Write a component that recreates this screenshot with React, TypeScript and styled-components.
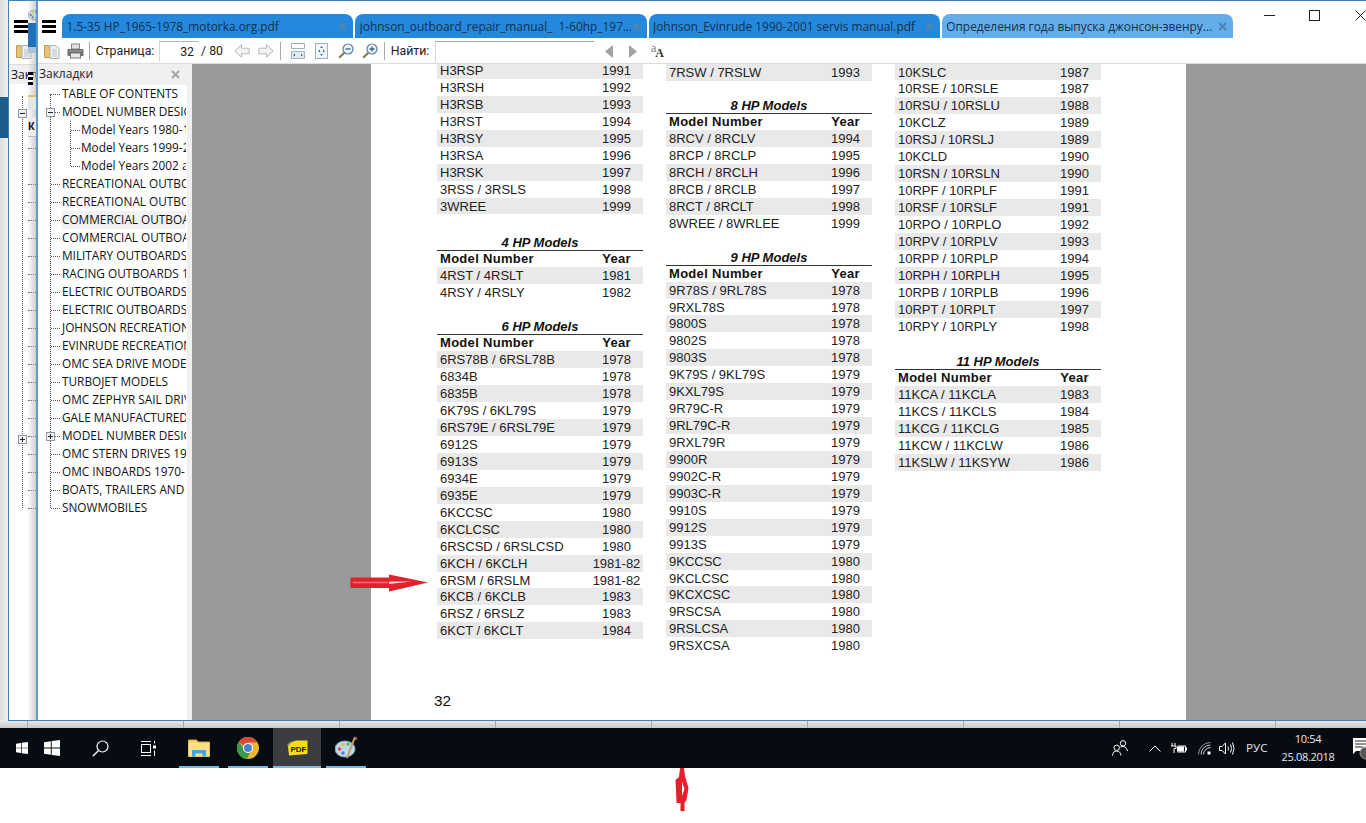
import React from 'react';
import styled, { createGlobalStyle } from 'styled-components';

const GlobalStyle = createGlobalStyle`
  html, body {
    margin: 0;
    padding: 0;
    background: #fff;
    overflow: hidden;
  }
  * {
    box-sizing: border-box;
  }
`;

const uiFont = `"Open Sans", "Noto Sans", sans-serif`;
const toolFont = `Roboto, "Open Sans", sans-serif`;
const docFont = `"Liberation Sans", Arial, sans-serif`;

const Screen = styled.div`
  width: 1366px;
  height: 823px;
  overflow: hidden;
  display: flex;
  flex-direction: column;
  background: #fff;
`;

const Desktop = styled.div`
  position: relative;
  height: 728px;
  flex: none;
  overflow: hidden;
  background: linear-gradient(90deg, #dcdcdc 0, #f1f1f1 8px);
`;

const OtherAppBand = styled.div`
  position: absolute;
  left: 0;
  top: 97px;
  width: 8px;
  height: 41px;
  background: #1a5c8c;
`;

const WindowEdgeStrip = styled.div`
  position: absolute;
  left: 0;
  right: 0;
  bottom: 0;
  height: 8px;
  background:
    repeating-linear-gradient(90deg, transparent 0, transparent 27px, #a9a9a9 27px, #a9a9a9 28px, transparent 28px, transparent 156px),
    linear-gradient(180deg, #ececec, #c8c8c8);
`;

/* the window sitting behind the active one, only its left edge shows */
const BackWindow = styled.div`
  position: absolute;
  left: 8px;
  top: 0;
  width: 28px;
  height: 721px;
  background: #fff;
  border-left: 1px solid #3f82b8;
  border-top: 1px solid #3f82b8;
  border-bottom: 1px solid #3f82b8;
  overflow: hidden;
`;

const BackShade = styled.div`
  position: absolute;
  left: 19px;
  top: 0;
  bottom: 0;
  width: 8px;
  background: linear-gradient(90deg, rgba(225, 225, 225, 0.15), rgba(170, 170, 170, 0.55));
`;

const BackHeader = styled.div`
  position: absolute;
  left: 0;
  right: 0;
  top: 63px;
  height: 20px;
  background: #f0f0f0;
  border-top: 1px solid #ddd;
  font: 12px/19px ${uiFont};
  color: #111;
  padding-left: 2px;
  white-space: nowrap;
  overflow: hidden;
`;

const BackBurger = styled.div`
  position: absolute;
  left: 5px;
  top: 19px;
`;

const BackFolder = styled.div`
  position: absolute;
  left: 7px;
  top: 42px;
`;

const BackPaint = styled.div`
  position: absolute;
  left: 19px;
  top: 6px;
`;

const BackTabBlue = styled.div`
  position: absolute;
  left: 19px;
  top: 22px;
  width: 8px;
  height: 30px;
  background: #1f70ba;
  border-bottom: 6px solid #a9c0d8;
`;

const BackMiniBurger = styled.div`
  position: absolute;
  left: 19px;
  top: 71px;
  width: 5px;
  height: 13px;
  background: repeating-linear-gradient(180deg, #000 0, #000 3px, #fff 3px, #fff 5px);
`;

const BackDoc = styled.div`
  position: absolute;
  left: 19px;
  top: 94px;
  width: 8px;
  height: 15px;
  background: #e4e7ea;
  border-top: 2px solid #d6c27a;
`;

const BackColumnHead = styled.div`
  position: absolute;
  left: 19px;
  top: 116px;
  width: 8px;
  height: 20px;
  background: #ececec;
  border-bottom: 1px solid #bbb;
  font: bold 11px/18px ${docFont};
  color: #111;
  overflow: hidden;
`;

const BackTree = styled.div`
  position: absolute;
  left: 13px;
  top: 95px;
  height: 412px;
  width: 14px;
  border-left: 1px dotted #555;
`;

const BackTreeTick = styled.div<{ $top: number }>`
  position: absolute;
  left: 19px;
  width: 8px;
  top: ${(p) => p.$top}px;
  border-top: 1px dotted #555;
`;

const BackToggle = styled.div<{ $top: number }>`
  position: absolute;
  left: 9px;
  top: ${(p) => p.$top}px;
`;

const AppWindow = styled.div`
  position: absolute;
  left: 36px;
  top: 0;
  right: 0;
  height: 721px;
  display: flex;
  flex-direction: column;
  background: #fff;
  border-top: 1px solid #3f82b8;
  border-left: 2px solid #5f9acb;
  border-bottom: 1px solid #3f82b8;
  overflow: hidden;
`;

const TitleBar = styled.div`
  height: 37px;
  flex: none;
  display: flex;
  align-items: flex-end;
  padding-left: 4px;
`;

const Burger = styled.div`
  width: 14px;
  height: 13px;
  margin-bottom: 5px;
  margin-right: 6px;
  flex: none;
  background: repeating-linear-gradient(180deg, #000 0, #000 3px, #fff 3px, #fff 5px);
`;

const TabStrip = styled.div`
  display: flex;
  gap: 2px;
`;

const Tab = styled.div<{ $dim?: boolean }>`
  width: 291.25px;
  height: 24px;
  display: flex;
  align-items: center;
  padding: 0 5px 0 4.5px;
  border-radius: 8px 8px 0 0;
  background: ${(p) => (p.$dim ? '#63aeea' : '#2488dc')};
  color: #12314d;
  font: 11.9px/24px ${uiFont};
  white-space: pre;
`;

const TabTitle = styled.span`
  flex: 1;
  overflow: hidden;
`;

const WindowControls = styled.div`
  margin-left: auto;
  margin-right: -17px;
  align-self: flex-start;
  display: flex;
`;

const WindowButton = styled.div`
  width: 45.5px;
  height: 28px;
  display: flex;
  align-items: center;
  justify-content: center;
`;

const Toolbar = styled.div`
  height: 26px;
  flex: none;
  display: flex;
  align-items: center;
  border-bottom: 1px solid #dcdcdc;
  padding-top: 1px;
  font: 12.3px/18px ${toolFont};
  color: #222;
  white-space: nowrap;
`;

const Tool = styled.div<{ $ml: number; $w?: number }>`
  margin-left: ${(p) => p.$ml}px;
  width: ${(p) => (p.$w ? `${p.$w}px` : 'auto')};
  flex: none;
  display: flex;
  align-items: center;
  justify-content: center;
`;

const ToolSep = styled.div<{ $ml: number }>`
  margin-left: ${(p) => p.$ml}px;
  width: 1px;
  height: 18px;
  background: #a8a8a8;
  flex: none;
`;

const PageInput = styled.div`
  margin-left: 6px;
  width: 39px;
  height: 21px;
  flex: none;
  border-top: 1px solid #b5b5b5;
  border-left: 1px solid #d5d5d5;
  text-align: right;
  padding-right: 4px;
  line-height: 20px;
`;

const SearchInput = styled.div`
  margin-left: 7px;
  width: 159px;
  height: 21px;
  flex: none;
  border-top: 1px solid #a8a8a8;
  border-left: 1px solid #d5d5d5;
`;

const CaseToggle = styled.div`
  margin-left: 14px;
  width: 15px;
  height: 14px;
  flex: none;
  display: flex;
  color: #333;
  font-family: "Liberation Serif", serif;
  line-height: 12px;
`;

const CaseSmall = styled.span`
  font-size: 12px;
  color: #777;
  margin-top: -2px;
`;

const CaseBig = styled.span`
  font-size: 12px;
  font-weight: bold;
  margin-left: -1px;
  margin-top: 3px;
`;

const MainArea = styled.div`
  flex: 1;
  min-height: 0;
  display: flex;
`;

const Sidebar = styled.div`
  width: 149px;
  flex: none;
  display: flex;
  flex-direction: column;
  overflow: hidden;
  background: #fff;
`;

const SidebarHead = styled.div`
  height: 21px;
  flex: none;
  display: flex;
  align-items: center;
  justify-content: space-between;
  padding: 0 6px 1px 1px;
  background: #f0f0f0;
  font: 12px/20px ${uiFont};
  color: #222;
`;

const Splitter = styled.div`
  width: 5px;
  flex: none;
  background: #f0f0f0;
`;

const Tree = styled.div`
  position: relative;
  margin-right: 1px;
  &::before {
    content: '';
    position: absolute;
    left: 12px;
    top: 9px;
    bottom: 9px;
    border-left: 1px dotted #555;
  }
`;

const TreeBranch = styled.div`
  position: relative;
  &::before {
    content: '';
    position: absolute;
    left: 32px;
    top: 0;
    bottom: 9px;
    border-left: 1px dotted #555;
  }
`;

const TreeRow = styled.div<{ $level?: number; $active?: boolean }>`
  position: relative;
  height: 18px;
  padding-left: ${(p) => (p.$level === 2 ? 43 : 24)}px;
  font: 11.8px/16px ${uiFont};
  color: #111;
  white-space: nowrap;
  overflow: hidden;
  background: ${(p) => (p.$active ? '#f2f2f2' : 'transparent')};
  background-clip: content-box;
  &::before {
    content: '';
    position: absolute;
    top: 9px;
    left: ${(p) => (p.$level === 2 ? 33 : 13)}px;
    width: 9px;
    border-top: 1px dotted #555;
  }
`;

const ToggleBox = styled.div`
  position: absolute;
  left: 8px;
  top: 5px;
  z-index: 1;
`;

const Viewer = styled.div`
  flex: 1;
  min-width: 0;
  display: flex;
  justify-content: center;
  padding-right: 1px;
  background: #9a9a9a;
  overflow: hidden;
`;

const Page = styled.div`
  position: relative;
  width: 815px;
  height: 656px;
  flex: none;
  background: #fff;
  padding-left: 66px;
  display: flex;
  flex-direction: column;
  font: 13px/17px ${docFont};
  color: #222;
`;

const Columns = styled.div`
  display: flex;
  gap: 23px;
`;

const Column = styled.div<{ $offset: number }>`
  width: 206px;
  flex: none;
  margin-top: ${(p) => p.$offset}px;
`;

const Section = styled.div<{ $gap: number }>`
  margin-top: ${(p) => p.$gap}px;
`;

const SectionTitle = styled.div`
  height: 16px;
  line-height: 16px;
  text-align: center;
  font-weight: bold;
  font-style: italic;
  color: #111;
  border-bottom: 1.5px solid #333;
`;

const RowBase = styled.div`
  height: 16.95px;
  line-height: 17px;
  display: grid;
  grid-template-columns: 150px 56px;
  padding-left: 3px;
  white-space: nowrap;
`;

const HeadRow = styled(RowBase)`
  height: 16px;
  line-height: 16px;
  font-weight: bold;
  letter-spacing: 0.3px;
  color: #111;
`;

const RowList = styled.div`
  & > :nth-child(odd) {
    background: #e9e9e9;
  }
`;

const YearCell = styled.span`
  text-align: center;
  margin-left: -3px;
`;

const PageNumber = styled.div`
  position: absolute;
  left: 63px;
  top: 628px;
  font-size: 15.3px;
  line-height: 18px;
  color: #111;
`;

const ArrowMark = styled.svg`
  position: absolute;
  left: -21px;
  top: 510px;
`;

const Taskbar = styled.div`
  height: 40px;
  flex: none;
  display: flex;
  align-items: stretch;
  background: #070b12;
  color: #e8e8e8;
`;

const TaskSlot = styled.div<{ $ml: number; $w: number }>`
  margin-left: ${(p) => p.$ml}px;
  width: ${(p) => p.$w}px;
  flex: none;
  display: flex;
  align-items: center;
  justify-content: center;
`;

const AppSlot = styled(TaskSlot)<{ $current?: boolean }>`
  border-bottom: 2px solid #76b9ed;
  padding-top: 1px;
  background: ${(p) => (p.$current ? '#3a3c40' : 'transparent')};
`;

const Tray = styled.div`
  margin-left: auto;
  display: flex;
  align-items: stretch;
`;

const LangLabel = styled.div`
  margin-left: 11px;
  width: 22px;
  flex: none;
  display: flex;
  align-items: center;
  font: 11.6px/40px ${uiFont};
  white-space: nowrap;
`;

const Clock = styled.div`
  margin-left: 13px;
  width: 54px;
  flex: none;
  display: flex;
  flex-direction: column;
  align-items: center;
  justify-content: center;
  font: 11px/18px ${uiFont};
  letter-spacing: -0.3px;
  white-space: nowrap;
`;

const BottomArea = styled.div`
  flex: 1;
  padding-left: 675px;
  background: #fff;
`;

const LineIcon = styled.svg`
  display: block;
  flex: none;
`;

type Entry = [string, string];

const toRows = (text: string): Entry[] =>
  text.split('|').map((item) => item.split('=') as Entry);

const HP4 = toRows('4RST / 4RSLT=1981|4RSY / 4RSLY=1982');
const HP3 = toRows(
  'H3RSP=1991|H3RSH=1992|H3RSB=1993|H3RST=1994|H3RSY=1995|H3RSA=1996|H3RSK=1997|3RSS / 3RSLS=1998|3WREE=1999'
);
const HP6 = toRows(
  '6RS78B / 6RSL78B=1978|6834B=1978|6835B=1978|6K79S / 6KL79S=1979|6RS79E / 6RSL79E=1979|6912S=1979|6913S=1979|6934E=1979|6935E=1979|6KCCSC=1980|6KCLCSC=1980|6RSCSD / 6RSLCSD=1980|6KCH / 6KCLH=1981-82|6RSM / 6RSLM=1981-82|6KCB / 6KCLB=1983|6RSZ / 6RSLZ=1983|6KCT / 6KCLT=1984'
);
const HP7 = toRows('7RSW / 7RSLW=1993');
const HP8 = toRows(
  '8RCV / 8RCLV=1994|8RCP / 8RCLP=1995|8RCH / 8RCLH=1996|8RCB / 8RCLB=1997|8RCT / 8RCLT=1998|8WREE / 8WRLEE=1999'
);
const HP9 = toRows(
  '9R78S / 9RL78S=1978|9RXL78S=1978|9800S=1978|9802S=1978|9803S=1978|9K79S / 9KL79S=1979|9KXL79S=1979|9R79C-R=1979|9RL79C-R=1979|9RXL79R=1979|9900R=1979|9902C-R=1979|9903C-R=1979|9910S=1979|9912S=1979|9913S=1979|9KCCSC=1980|9KCLCSC=1980|9KCXCSC=1980|9RSCSA=1980|9RSLCSA=1980|9RSXCSA=1980'
);
const HP10 = toRows(
  '10KSLC=1987|10RSE / 10RSLE=1987|10RSU / 10RSLU=1988|10KCLZ=1989|10RSJ / 10RSLJ=1989|10KCLD=1990|10RSN / 10RSLN=1990|10RPF / 10RPLF=1991|10RSF / 10RSLF=1991|10RPO / 10RPLO=1992|10RPV / 10RPLV=1993|10RPP / 10RPLP=1994|10RPH / 10RPLH=1995|10RPB / 10RPLB=1996|10RPT / 10RPLT=1997|10RPY / 10RPLY=1998'
);
const HP11 = toRows(
  '11KCA / 11KCLA=1983|11KCS / 11KCLS=1984|11KCG / 11KCLG=1985|11KCW / 11KCLW=1986|11KSLW / 11KSYW=1986'
);

const tabs = [
  '1.5-35 HP_1965-1978_motorka.org.pdf',
  'johnson_outboard_repair_manual_  1-60hp_197...',
  'Johnson_Evinrude 1990-2001 servis manual.pdf',
  'Определения года выпуска джонсон-эвенру...',
];

const treeTop = ['TABLE OF CONTENTS'];
const treeMiddle = [
  'RECREATIONAL OUTBOARDS',
  'RECREATIONAL OUTBOARDS',
  'COMMERCIAL OUTBOARDS',
  'COMMERCIAL OUTBOARDS',
  'MILITARY OUTBOARDS',
  'RACING OUTBOARDS 1',
  'ELECTRIC OUTBOARDS',
  'ELECTRIC OUTBOARDS',
  'JOHNSON RECREATIONAL',
  'EVINRUDE RECREATIONAL',
  'OMC SEA DRIVE MODELS',
  'TURBOJET MODELS',
  'OMC ZEPHYR SAIL DRIVE',
  'GALE MANUFACTURED',
];
const treeBottom = [
  'OMC STERN DRIVES 1960',
  'OMC INBOARDS 1970-1',
  'BOATS, TRAILERS AND',
  'SNOWMOBILES',
];

const backTicks = [147, 183, 201, 219, 237, 255, 273, 291, 309, 327, 345, 363, 381, 399, 417, 435, 453, 471, 489, 507];

const CloseIcon = ({ color = '#4f86b5' }: { color?: string }) => (
  <LineIcon width="11" height="11" viewBox="0 0 11 11">
    <path d="M2 2l7 7M9 2l-7 7" stroke={color} strokeWidth="2.2" />
  </LineIcon>
);

const Toggle = ({ open }: { open: boolean }) => (
  <LineIcon width="9" height="9" viewBox="0 0 9 9">
    <rect x="0.5" y="0.5" width="8" height="8" fill="#f4f4f4" stroke="#8c97a3" />
    <path d={open ? 'M2 4.5h5' : 'M2 4.5h5M4.5 2v5'} stroke="#223" />
  </LineIcon>
);

const FolderIcon = () => (
  <LineIcon width="16" height="16" viewBox="0 0 16 16">
    <path d="M0.500 2.500h4l1 1.500h2v10.500h-7z" fill="#e8c374" stroke="#c79b45" />
    <path d="M6 2.500h6l3 3v10h-9z" fill="#eef1f3" stroke="#a8b0b8" />
    <path d="M8 7h5M8 9h5M8 11h5M8 13h5" stroke="#b9c2ca" />
  </LineIcon>
);

const PrinterIcon = () => (
  <LineIcon width="17" height="16" viewBox="0 0 17 16">
    <rect x="4.500" y="1" width="8" height="5" fill="#e2e2e2" stroke="#888" />
    <rect x="0.500" y="6" width="16" height="7" rx="1" fill="#6f6f6f" />
    <rect x="3.500" y="10" width="10" height="5" fill="#e9e9e9" stroke="#777" />
    <path d="M2 8h13" stroke="#a5a5a5" />
  </LineIcon>
);

const NavArrow = ({ flip }: { flip?: boolean }) => (
  <LineIcon width="16" height="14" viewBox="0 0 16 14" style={flip ? { transform: 'scaleX(-1)' } : undefined}>
    <path d="M0.800 7L7.500 0.800V4.200H15.200V9.800H7.500V13.200z" fill="#f2f2f2" stroke="#b9b9b9" />
  </LineIcon>
);

const FitWidthIcon = () => (
  <LineIcon width="14" height="16" viewBox="0 0 14 16">
    <path d="M0.500 0.500h13v5h-13z" fill="#fff" stroke="#9fb2c3" />
    <path d="M0.500 8.500h13v7h-13z" fill="#e4eaf0" stroke="#9fb2c3" />
    <path d="M2 12l2-1.500v3zM12 12l-2-1.500v3z" fill="#3b6ea5" />
  </LineIcon>
);

const FitPageIcon = () => (
  <LineIcon width="13" height="16" viewBox="0 0 13 16">
    <rect x="0.500" y="0.500" width="12" height="15" fill="#f3f6f9" stroke="#9fb2c3" />
    <path d="M6.500 3l-1.500 2h3zM6.500 13l-1.500-2h3zM3 8l2-1.500v3zM10 8l-2-1.500v3z" fill="#3b6ea5" />
  </LineIcon>
);

const ZoomIcon = ({ plus }: { plus?: boolean }) => (
  <LineIcon width="16" height="16" viewBox="0 0 16 16">
    <circle cx="10" cy="6" r="5" fill="#eef4fa" stroke="#5c7fa3" strokeWidth="1.200" />
    <path d={plus ? 'M7.500 6h5M10 3.500v5' : 'M7.500 6h5'} stroke="#2d5f96" strokeWidth="1.300" />
    <path d="M6.300 9.700L1.200 14.800" stroke="#8a7a55" strokeWidth="2.200" />
  </LineIcon>
);

const SearchNav = ({ flip }: { flip?: boolean }) => (
  <LineIcon width="8" height="13" viewBox="0 0 8 13">
    <path d={flip ? 'M0 0l8 6.500L0 13z' : 'M8 0L0 6.500 8 13z'} fill="#a2a2a2" />
  </LineIcon>
);

const WindowsLogo = ({ size }: { size: number }) => (
  <LineIcon width={size} height={size} viewBox="0 0 16 16">
    <path d="M0 2.200l6.800-1v6.300H0zM7.700 1.100L16 0v7.500H7.700zM0 8.400h6.800v6.400L0 13.800zM7.700 8.400H16V16l-8.300-1.100z" fill="#fff" />
  </LineIcon>
);

const SearchGlass = () => (
  <LineIcon width="17" height="17" viewBox="0 0 17 17">
    <circle cx="10.500" cy="6.500" r="5.500" fill="none" stroke="#fff" strokeWidth="1.200" />
    <path d="M6.500 10.500L0.800 16.300" stroke="#fff" strokeWidth="1.300" />
  </LineIcon>
);

const TaskViewIcon = () => (
  <LineIcon width="16" height="15" viewBox="0 0 16 15">
    <path d="M1 0.500h10M1 14.500h10" stroke="#fff" />
    <rect x="1.500" y="3.500" width="9" height="8" fill="none" stroke="#fff" />
    <rect x="13" y="4.500" width="3" height="3" fill="#fff" />
    <path d="M14.500 0v2.500M14.500 9.500V15" stroke="#fff" />
  </LineIcon>
);

const ExplorerIcon = () => (
  <LineIcon width="22" height="19" viewBox="0 0 22 19">
    <path d="M0.500 2h8l1.500 2h11.500v14.500H0.500z" fill="#f7d774" stroke="#d6aa3f" />
    <path d="M0.500 5h21v13.500h-21z" fill="#fbe08c" />
    <path d="M4 18.500v-6.500h14v6.500h-3.500v-3h-7v3z" fill="#3fa9dc" />
  </LineIcon>
);

const ChromeIcon = () => (
  <LineIcon width="22" height="22" viewBox="0 0 22 22">
    <circle cx="11" cy="11" r="11" fill="#e8b62c" />
    <path d="M11 0a11 11 0 0 1 9.530 5.500H11a5.500 5.500 0 0 0-4.900 3L2.200 4.400A11 11 0 0 1 11 0z" fill="#d9463a" />
    <path d="M2.200 4.400l4.800 8.200a5.500 5.500 0 0 0 5.800 3.100L10 22A11 11 0 0 1 2.200 4.400z" fill="#3a9a4c" />
    <circle cx="11" cy="11" r="5" fill="#fff" />
    <circle cx="11" cy="11" r="4" fill="#4a80d6" />
  </LineIcon>
);

const PdfIcon = () => (
  <LineIcon width="21" height="16" viewBox="0 0 21 16">
    <path d="M1 6Q4 1 10 0.500H20.500V14L2 15.500z" fill="#f3dc1c" />
    <path d="M0.500 6Q1.500 3 5 1.500" stroke="#8c8c8c" fill="none" strokeWidth="1.200" />
    <text x="11.500" y="12" textAnchor="middle" fontFamily="Liberation Sans" fontWeight="bold" fontSize="8" fill="#1a1a1a">PDF</text>
  </LineIcon>
);

const PaintIcon = ({ size }: { size: number }) => (
  <LineIcon width={size} height={size} viewBox="0 0 23 23">
    <ellipse cx="10" cy="13" rx="10" ry="8" fill="#bcd9ea" stroke="#7fa7bd" />
    <circle cx="4.500" cy="13" r="1.700" fill="#d9483c" />
    <circle cx="8" cy="8.500" r="1.700" fill="#e8c03a" />
    <circle cx="13" cy="8" r="1.700" fill="#6bb04a" />
    <circle cx="8" cy="17" r="1.700" fill="#4c7fc9" />
    <path d="M20 1L12 22" stroke="#c99a63" strokeWidth="2" />
    <path d="M21 0.500l1.500 3-3 .5z" fill="#c2693b" />
  </LineIcon>
);

const PeopleIcon = () => (
  <LineIcon width="16" height="16" viewBox="0 0 16 16">
    <circle cx="4.700" cy="7.800" r="2.700" fill="none" stroke="#fff" />
    <path d="M0.500 15.500Q1 11 4.700 11T9 15.500" fill="none" stroke="#fff" />
    <circle cx="11" cy="3.300" r="2.700" fill="none" stroke="#fff" />
    <path d="M8.500 7Q11 5.800 13 7T15.500 11" fill="none" stroke="#fff" />
  </LineIcon>
);

const ChevronIcon = () => (
  <LineIcon width="12" height="7" viewBox="0 0 12 7">
    <path d="M0.500 6.500L6 1l5.500 5.500" fill="none" stroke="#fff" />
  </LineIcon>
);

const BatteryIcon = () => (
  <LineIcon width="16" height="11" viewBox="0 0 16 11">
    <path d="M1 0v3M4 0v3M0 3h5v2.500H3V10M6.500 3H14.500V9H6.500" fill="none" stroke="#fff" />
    <rect x="6" y="3.500" width="7" height="5" fill="#fff" />
    <rect x="15" y="4.500" width="1" height="3" fill="#fff" />
  </LineIcon>
);

const WifiIcon = () => (
  <LineIcon width="13" height="13" viewBox="0 0 13 13">
    <path d="M0.500 12.500A12 12 0 0 1 12.500 0.500" fill="none" stroke="#8f959b" />
    <path d="M3 12.500A9.500 9.500 0 0 1 12.500 3M5.500 12.500A7 7 0 0 1 12.500 5.500" fill="none" stroke="#c7cacd" />
    <rect x="9.500" y="9.500" width="3" height="3" fill="#fff" />
  </LineIcon>
);

const VolumeIcon = () => (
  <LineIcon width="16" height="13" viewBox="0 0 16 13">
    <path d="M0.500 4.500h2.500L6.500 1v11L3 8.500H0.500z" fill="none" stroke="#fff" />
    <path d="M9 4.500Q10 6.500 9 8.500M11.500 2.500Q13.500 6.500 11.500 10.500M13.500 0.500Q16.500 6.500 13.500 12.500" fill="none" stroke="#fff" />
  </LineIcon>
);

const NotifyIcon = () => (
  <LineIcon width="13" height="24" viewBox="0 0 13 24">
    <path d="M0 2h13v13H3l-3 3z" fill="#fff" />
    <path d="M2 5h11M2 8h11M2 11h8" stroke="#222" />
    <circle cx="13" cy="17" r="6" fill="#555" stroke="#999" />
  </LineIcon>
);

function DataRows({ rows }: { rows: Entry[] }) {
  return (
    <RowList>
      {rows.map(([model, year]) => (
        <RowBase key={model}>
          <span>{model}</span>
          <YearCell>{year}</YearCell>
        </RowBase>
      ))}
    </RowList>
  );
}

function ModelTable({ title, rows, gap }: { title: string; rows: Entry[]; gap: number }) {
  return (
    <Section $gap={gap}>
      <SectionTitle>{title}</SectionTitle>
      <HeadRow>
        <span>Model Number</span>
        <YearCell>Year</YearCell>
      </HeadRow>
      <DataRows rows={rows} />
    </Section>
  );
}

function App() {
  return (
    <Screen>
      <GlobalStyle />
      <Desktop>
        <OtherAppBand />
        <WindowEdgeStrip />
        <BackWindow>
          <BackBurger>
            <Burger />
          </BackBurger>
          <BackFolder>
            <FolderIcon />
          </BackFolder>
          <BackHeader>Закладки</BackHeader>
          <BackTree />
          {backTicks.map((top) => (
            <BackTreeTick key={top} $top={top} />
          ))}
          <BackToggle $top={108}>
            <Toggle open />
          </BackToggle>
          <BackToggle $top={434}>
            <Toggle open={false} />
          </BackToggle>
          <BackShade />
          <BackPaint>
            <PaintIcon size={14} />
          </BackPaint>
          <BackTabBlue />
          <BackMiniBurger />
          <BackDoc />
          <BackColumnHead>К</BackColumnHead>
        </BackWindow>

        <AppWindow>
          <TitleBar>
            <Burger />
            <TabStrip>
              {tabs.map((name, i) => (
                <Tab key={name} $dim={i === 3}>
                  <TabTitle>{name}</TabTitle>
                  <CloseIcon />
                </Tab>
              ))}
            </TabStrip>
            <WindowControls>
              <WindowButton>
                <LineIcon width="11" height="11" viewBox="0 0 11 11">
                  <path d="M0 5.500h11" stroke="#222" />
                </LineIcon>
              </WindowButton>
              <WindowButton>
                <LineIcon width="11" height="11" viewBox="0 0 11 11">
                  <rect x="0.500" y="0.500" width="10" height="10" fill="none" stroke="#222" />
                </LineIcon>
              </WindowButton>
              <WindowButton>
                <LineIcon width="11" height="11" viewBox="0 0 11 11">
                  <path d="M0.500 0.500l10 10M10.500 0.500l-10 10" stroke="#222" />
                </LineIcon>
              </WindowButton>
            </WindowControls>
          </TitleBar>

          <Toolbar>
            <Tool $ml={6} $w={16}>
              <FolderIcon />
            </Tool>
            <Tool $ml={7} $w={17}>
              <PrinterIcon />
            </Tool>
            <ToolSep $ml={5} />
            <Tool $ml={7} $w={56}>Страница:</Tool>
            <PageInput>32</PageInput>
            <Tool $ml={4} $w={20}>/ 80</Tool>
            <Tool $ml={12} $w={16}>
              <NavArrow />
            </Tool>
            <Tool $ml={8} $w={16}>
              <NavArrow flip />
            </Tool>
            <ToolSep $ml={6} />
            <Tool $ml={10} $w={14}>
              <FitWidthIcon />
            </Tool>
            <Tool $ml={10} $w={13}>
              <FitPageIcon />
            </Tool>
            <Tool $ml={10} $w={16}>
              <ZoomIcon />
            </Tool>
            <Tool $ml={8} $w={16}>
              <ZoomIcon plus />
            </Tool>
            <ToolSep $ml={6} />
            <Tool $ml={7} $w={36}>Найти:</Tool>
            <SearchInput />
            <Tool $ml={11} $w={8}>
              <SearchNav />
            </Tool>
            <Tool $ml={16} $w={8}>
              <SearchNav flip />
            </Tool>
            <CaseToggle>
              <CaseSmall>a</CaseSmall>
              <CaseBig>A</CaseBig>
            </CaseToggle>
          </Toolbar>

          <MainArea>
            <Sidebar>
              <SidebarHead>
                Закладки
                <CloseIcon color="#a9a9a9" />
              </SidebarHead>
              <Tree>
                {treeTop.map((name) => (
                  <TreeRow key={name}>{name}</TreeRow>
                ))}
                <TreeRow>
                  <ToggleBox>
                    <Toggle open />
                  </ToggleBox>
                  MODEL NUMBER DESIGNATIONS
                </TreeRow>
                <TreeBranch>
                  <TreeRow $level={2}>Model Years 1980-1998</TreeRow>
                  <TreeRow $level={2}>Model Years 1999-2001</TreeRow>
                  <TreeRow $level={2}>Model Years 2002 and up</TreeRow>
                </TreeBranch>
                {treeMiddle.map((name, i) => (
                  <TreeRow key={`${name}-${i}`} $active={i === 2}>
                    {name}
                  </TreeRow>
                ))}
                <TreeRow>
                  <ToggleBox>
                    <Toggle open={false} />
                  </ToggleBox>
                  MODEL NUMBER DESIGNATIONS
                </TreeRow>
                {treeBottom.map((name) => (
                  <TreeRow key={name}>{name}</TreeRow>
                ))}
              </Tree>
            </Sidebar>
            <Splitter />
            <Viewer>
              <Page>
                <Columns>
                  <Column $offset={-2}>
                    <DataRows rows={HP3} />
                    <ModelTable title="4 HP Models" rows={HP4} gap={20.5} />
                    <ModelTable title="6 HP Models" rows={HP6} gap={18.5} />
                  </Column>
                  <Column $offset={0}>
                    <DataRows rows={HP7} />
                    <ModelTable title="8 HP Models" rows={HP8} gap={17} />
                    <ModelTable title="9 HP Models" rows={HP9} gap={18} />
                  </Column>
                  <Column $offset={-0.5}>
                    <DataRows rows={HP10} />
                    <ModelTable title="11 HP Models" rows={HP11} gap={19.5} />
                  </Column>
                </Columns>
                <ArrowMark width="80" height="20" viewBox="0 0 80 20">
                  <path d="M0.500 3.500H39V0.500L78 8.500 39 17.500V14H0.500z" fill="#e3202b" />
                  <path d="M3 8.500H38" stroke="#f07078" strokeWidth="1.500" />
                  <path d="M39 7.500H62L39 10z" fill="#fbdcdc" />
                </ArrowMark>
                <PageNumber>32</PageNumber>
              </Page>
            </Viewer>
          </MainArea>
        </AppWindow>
      </Desktop>

      <Taskbar>
        <TaskSlot $ml={16} $w={12}>
          <WindowsLogo size={12} />
        </TaskSlot>
        <TaskSlot $ml={16} $w={16}>
          <WindowsLogo size={16} />
        </TaskSlot>
        <TaskSlot $ml={32} $w={16}>
          <SearchGlass />
        </TaskSlot>
        <TaskSlot $ml={32} $w={16}>
          <TaskViewIcon />
        </TaskSlot>
        <AppSlot $ml={23} $w={40}>
          <ExplorerIcon />
        </AppSlot>
        <AppSlot $ml={9} $w={40}>
          <ChromeIcon />
        </AppSlot>
        <AppSlot $ml={5} $w={48} $current>
          <PdfIcon />
        </AppSlot>
        <AppSlot $ml={5} $w={40}>
          <PaintIcon size={23} />
        </AppSlot>
        <Tray>
          <TaskSlot $ml={0} $w={16}>
            <PeopleIcon />
          </TaskSlot>
          <TaskSlot $ml={21} $w={12}>
            <ChevronIcon />
          </TaskSlot>
          <TaskSlot $ml={10} $w={16}>
            <BatteryIcon />
          </TaskSlot>
          <TaskSlot $ml={11} $w={13}>
            <WifiIcon />
          </TaskSlot>
          <TaskSlot $ml={8} $w={16}>
            <VolumeIcon />
          </TaskSlot>
          <LangLabel>РУС</LangLabel>
          <Clock>
            <span>10:54</span>
            <span>25.08.2018</span>
          </Clock>
          <TaskSlot $ml={18} $w={13}>
            <NotifyIcon />
          </TaskSlot>
        </Tray>
      </Taskbar>

      <BottomArea>
        <LineIcon width="14" height="44" viewBox="0 0 14 44">
          <path d="M5 0H9L10 8 13.500 20 11.500 32 9.500 35V43H5.500V35H1.500L0.500 12 4 9z" fill="#e3202b" />
          <path d="M7 14L9.500 21 7 28z" fill="#fff" />
        </LineIcon>
      </BottomArea>
    </Screen>
  );
}

export default App;
